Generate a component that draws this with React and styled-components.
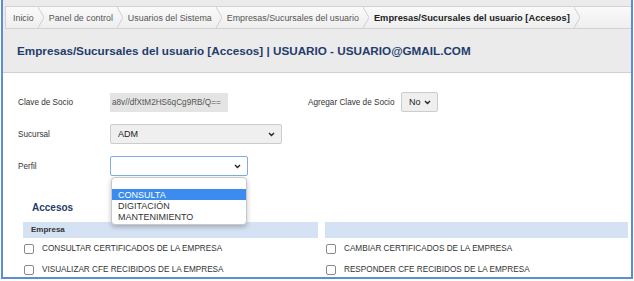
import React from 'react';
import styled, { createGlobalStyle } from 'styled-components';

const GlobalStyle = createGlobalStyle`
  html, body {
    margin: 0;
    padding: 0;
    background: #ffffff;
    font-family: "Liberation Sans", Arial, sans-serif;
  }
`;

const Frame = styled.div`
  box-sizing: border-box;
  margin-left: 1px;
  width: 632px;
  height: 279px;
  border: 2px solid #5b8dd6;
  border-top: none;
  background: #ffffff;
  overflow: hidden;
  display: flex;
  flex-direction: column;
`;

const TopArea = styled.div`
  background: #ebebeb;
  border-bottom: 1px solid #cfcfcf;
  padding-top: 6px;
`;

const Breadcrumb = styled.div`
  display: flex;
  align-items: center;
  height: 21px;
  margin-left: 2px;
  padding-left: 7px;
  border: 1px solid #d2d2d2;
  border-right: none;
  background: linear-gradient(#fafafa, #eeeeee);
`;

const Crumb = styled.span`
  display: flex;
  align-items: center;
  height: 100%;
  font-size: ${({ $active }) => ($active ? '9.3px' : '8.9px')};
  color: ${({ $active }) => ($active ? '#222' : '#555')};
  font-weight: ${({ $active }) => ($active ? 'bold' : 'normal')};
  white-space: nowrap;
`;

const Sep = styled.svg`
  flex: none;
  margin: 0 5px 0 4px;
`;

const Title = styled.h1`
  margin: 0;
  height: 43px;
  display: flex;
  align-items: center;
  padding-left: 14px;
  font-size: 11.7px;
  font-weight: bold;
  color: #1f3d6c;
  white-space: nowrap;
`;

const Content = styled.div`
  padding-top: 19px;
`;

const FormRow = styled.div`
  display: flex;
  align-items: center;
  height: 20px;
  margin-bottom: 12px;
  padding-left: 15px;
  font-size: 8.2px;
  color: #333;
`;

const Label = styled.div`
  width: ${({ $w }) => $w || 92}px;
  flex: none;
`;

const ReadOnly = styled.div`
  box-sizing: border-box;
  width: 118px;
  height: 19px;
  display: flex;
  align-items: center;
  padding-left: 2px;
  background: #e4e4e4;
  color: #555;
  font-size: 8.2px;
  margin-right: 80px;
`;

const Select = styled.div`
  position: relative;
  box-sizing: border-box;
  width: ${({ $w }) => $w}px;
  height: ${({ $h }) => $h || 20}px;
  display: flex;
  align-items: center;
  justify-content: space-between;
  padding: 0 6px 0 7px;
  background: ${({ $focus }) => ($focus ? '#ffffff' : '#efefef')};
  border: 1px solid ${({ $focus }) => ($focus ? '#7eaee6' : '#cccccc')};
  border-radius: 2px;
  font-size: 9px;
  color: #222;
`;

const Popup = styled.div`
  position: absolute;
  left: 0;
  top: 20px;
  width: 136px;
  box-sizing: border-box;
  padding: 0 0 2px;
  background: #ffffff;
  border: 1px solid #c8c8c8;
  border-radius: 4px;
  box-shadow: 0 2px 5px rgba(0, 0, 0, 0.25);
  z-index: 2;
`;

const Option = styled.div`
  height: 11px;
  line-height: 12px;
  padding-left: 6px;
  font-size: 9px;
  color: ${({ $sel }) => ($sel ? '#ffffff' : '#333')};
  background: ${({ $sel }) => ($sel ? '#3c8cf0' : 'transparent')};
`;

const Accesos = styled.div`
  margin-top: 24px;
  padding: 0 3px 0 20px;
`;

const SectionTitle = styled.div`
  height: 16px;
  line-height: 16px;
  padding-left: 9px;
  margin-bottom: 6px;
  font-size: 10px;
  font-weight: bold;
  color: #1f3d6c;
`;

const Grid = styled.div`
  display: grid;
  grid-template-columns: 295px 1fr;
  column-gap: 7px;
`;

const HeadCell = styled.div`
  height: 16px;
  line-height: 16px;
  padding-left: 8px;
  background: #d5e2f3;
  font-size: 8px;
  font-weight: bold;
  color: #333;
`;

const CheckRow = styled.label`
  display: flex;
  align-items: center;
  height: 21px;
  padding-left: 1px;
  font-size: 8.2px;
  color: #333;
  white-space: nowrap;
`;

const Box = styled.span`
  box-sizing: border-box;
  width: 10px;
  height: 10px;
  border: 1px solid #8a8a8a;
  border-radius: 2px;
  background: #fff;
  margin-right: ${({ $gap }) => $gap}px;
  flex: none;
`;

const Chevron = () => (
  <svg width="7" height="5" viewBox="0 0 7 5">
    <path d="M1 1 L3.5 3.5 L6 1" fill="none" stroke="#222" strokeWidth="1.4" />
  </svg>
);

const crumbs = [
  'Inicio',
  'Panel de control',
  'Usuarios del Sistema',
  'Empresas/Sucursales del usuario',
  'Empresas/Sucursales del usuario [Accesos]',
];

const left = ['CONSULTAR CERTIFICADOS DE LA EMPRESA', 'VISUALIZAR CFE RECIBIDOS DE LA EMPRESA'];
const right = ['CAMBIAR CERTIFICADOS DE LA EMPRESA', 'RESPONDER CFE RECIBIDOS DE LA EMPRESA'];

export default function App() {
  return (
    <>
      <GlobalStyle />
      <Frame>
        <TopArea>
          <Breadcrumb>
            {crumbs.map((c, i) => (
              <Crumb key={c} $active={i === crumbs.length - 1}>
                {c}
                <Sep width="6" height="21" viewBox="0 0 6 21">
                  <path d="M0 0 L6 10.5 L0 21" fill="none" stroke="#cfcfcf" strokeWidth="1" />
                </Sep>
              </Crumb>
            ))}
          </Breadcrumb>
          <Title>Empresas/Sucursales del usuario [Accesos] | USUARIO - USUARIO@GMAIL.COM</Title>
        </TopArea>
        <Content>
          <FormRow>
            <Label>Clave de Socio</Label>
            <ReadOnly>a8v//dfXtM2HS6qCg9RB/Q==</ReadOnly>
            <Label $w={93}>Agregar Clave de Socio</Label>
            <Select $w={37}>
              No <Chevron />
            </Select>
          </FormRow>
          <FormRow>
            <Label>Sucursal</Label>
            <Select $w={172} $h={20}>
              ADM <Chevron />
            </Select>
          </FormRow>
          <FormRow>
            <Label>Perfil</Label>
            <Select $w={138} $focus>
              <span />
              <Chevron />
              <Popup>
                <Option>&nbsp;</Option>
                <Option $sel>CONSULTA</Option>
                <Option>DIGITACIÓN</Option>
                <Option>MANTENIMIENTO</Option>
              </Popup>
            </Select>
          </FormRow>
          <Accesos>
            <SectionTitle>Accesos</SectionTitle>
            <Grid>
              <HeadCell>Empresa</HeadCell>
              <HeadCell />
              {left.map((t, i) => (
                <React.Fragment key={t}>
                  <CheckRow>
                    <Box $gap={8} />
                    {t}
                  </CheckRow>
                  <CheckRow>
                    <Box $gap={8} />
                    {right[i]}
                  </CheckRow>
                </React.Fragment>
              ))}
            </Grid>
          </Accesos>
        </Content>
      </Frame>
    </>
  );
}
